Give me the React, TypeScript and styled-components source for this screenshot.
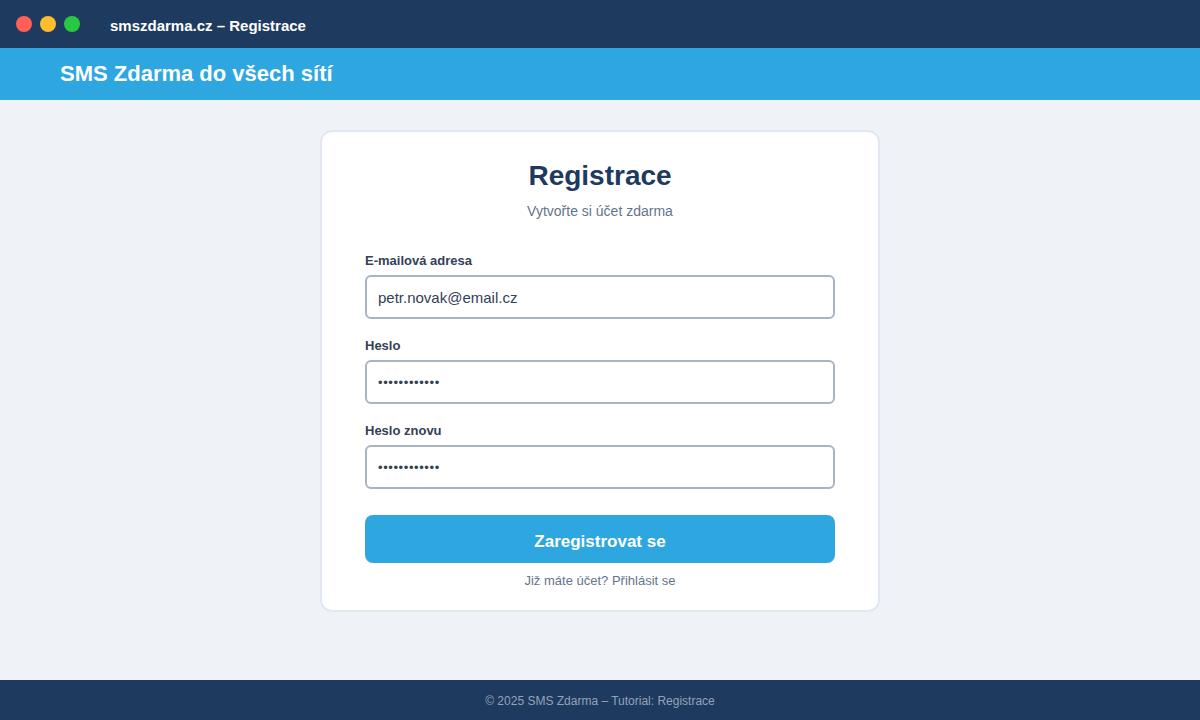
import React, { ReactElement } from 'react'
import styled, { createGlobalStyle } from 'styled-components'

const colorNavy = '#1e3a5f'
const colorBlue = '#2ea6e0'
const colorPage = '#eff3f8'
const colorMuted = '#64748b'

const GlobalStyle = createGlobalStyle`
  html, body {
    margin: 0;
    padding: 0;
    height: 100%;
  }
  body {
    font-family: "Liberation Sans", Arial, Helvetica, sans-serif;
    background: ${colorPage};
  }
  #root {
    height: 100%;
  }
`

const Page = styled.div`
  display: flex;
  flex-direction: column;
  height: 720px;
`

const TitleBar = styled.div`
  height: 48px;
  background: ${colorNavy};
  display: flex;
  align-items: center;
  padding-left: 16px;
  box-sizing: border-box;
`

const Dots = styled.div`
  display: flex;
  gap: 8px;
  margin-right: 30px;
`

const Dot = styled.span<{ $color: string }>`
  width: 16px;
  height: 16px;
  border-radius: 50%;
  background: ${(p) => p.$color};
`

const WindowTitle = styled.div`
  color: #fff;
  font-size: 15px;
  font-weight: 700;
  padding-top: 2px;
`

const Banner = styled.div`
  height: 52px;
  background: ${colorBlue};
  display: flex;
  align-items: center;
  padding-left: 60px;
  color: #fff;
  font-size: 22px;
  font-weight: 700;
`

const Main = styled.main`
  flex: 1;
  display: flex;
  justify-content: center;
  align-items: flex-start;
  padding-top: 30px;
`

const Card = styled.div`
  width: 560px;
  box-sizing: border-box;
  background: #fff;
  border: 2px solid #e2e8f0;
  border-radius: 12px;
  padding: 27px 43px 21px;
`

const Heading = styled.h1`
  margin: 0;
  text-align: center;
  color: ${colorNavy};
  font-size: 28px;
  line-height: 34px;
  font-weight: 700;
`

const Subtitle = styled.p`
  margin: 10px 0 33px;
  text-align: center;
  color: ${colorMuted};
  font-size: 14px;
  line-height: 17px;
`

const Field = styled.div`
  display: flex;
  flex-direction: column;
  margin-bottom: 19px;
`

const Label = styled.label`
  color: #334155;
  font-size: 13px;
  line-height: 15px;
  font-weight: 700;
  margin-bottom: 7px;
`

const Input = styled.input`
  height: 44px;
  box-sizing: border-box;
  border: 2px solid #a9b4c2;
  border-radius: 6px;
  padding: 0 11px;
  font-family: "Liberation Sans", Arial, sans-serif;
  font-size: 15px;
  color: #334155;
  outline: none;
  &[type='password'] {
    font-size: 13px;
    letter-spacing: 0.6px;
  }
`

const Button = styled.button`
  width: 100%;
  height: 48px;
  margin-top: 7px;
  padding-top: 6px;
  border: none;
  border-radius: 8px;
  background: ${colorBlue};
  color: #fff;
  font-family: "Liberation Sans", Arial, sans-serif;
  font-size: 17px;
  font-weight: 700;
  cursor: pointer;
`

const LoginHint = styled.p`
  margin: 10px 0 0;
  text-align: center;
  color: ${colorMuted};
  font-size: 13px;
  line-height: 16px;
`

const Footer = styled.footer`
  height: 40px;
  background: ${colorNavy};
  display: flex;
  align-items: center;
  justify-content: center;
  color: #94a3b8;
  font-size: 12px;
  padding-top: 2px;
  box-sizing: border-box;
`

export default function App(): ReactElement {
  return (
    <>
      <GlobalStyle />
      <Page>
        <TitleBar>
          <Dots>
            <Dot $color="#ff5f57" />
            <Dot $color="#febc2e" />
            <Dot $color="#28c840" />
          </Dots>
          <WindowTitle>smszdarma.cz – Registrace</WindowTitle>
        </TitleBar>
        <Banner>SMS Zdarma do všech sítí</Banner>
        <Main>
          <Card>
            <Heading>Registrace</Heading>
            <Subtitle>Vytvořte si účet zdarma</Subtitle>
            <Field>
              <Label>E-mailová adresa</Label>
              <Input type="email" defaultValue="petr.novak@email.cz" />
            </Field>
            <Field>
              <Label>Heslo</Label>
              <Input type="password" defaultValue="heslo1234567" />
            </Field>
            <Field>
              <Label>Heslo znovu</Label>
              <Input type="password" defaultValue="heslo1234567" />
            </Field>
            <Button>Zaregistrovat se</Button>
            <LoginHint>Již máte účet? Přihlásit se</LoginHint>
          </Card>
        </Main>
        <Footer>© 2025 SMS Zdarma – Tutorial: Registrace</Footer>
      </Page>
    </>
  )
}
